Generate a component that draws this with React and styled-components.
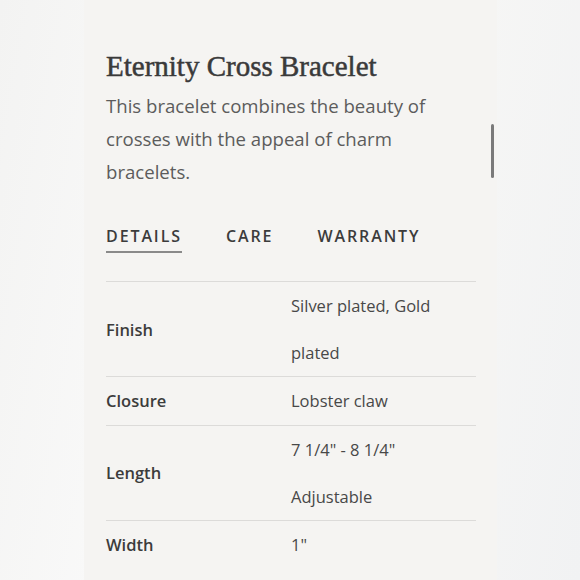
import React from "react";
import styled, { createGlobalStyle } from "styled-components";

const Global = createGlobalStyle`
  html, body { margin: 0; padding: 0; }
  body {
    width: 580px; height: 580px; overflow: hidden;
    background: linear-gradient(100deg, #f3f3f2 0%, #fbfbfb 40%, #f6f6f5 70%, #f1f2f3 100%);
    font-family: "Open Sans", "Noto Sans", sans-serif;
  }
`;

const Page = styled.div`
  display: flex;
  justify-content: flex-start;
  width: 580px;
  height: 580px;
`;

const Panel = styled.section`
  position: relative;
  margin-left: 84px;
  width: 413px;
  height: 580px;
  background: #f5f4f2;
  padding: 47px 21px 0 22px;
  box-sizing: border-box;
`;

const Scrollbar = styled.div`
  position: absolute;
  left: 407px;
  top: 124px;
  width: 3px;
  height: 54px;
  border-radius: 2px;
  background: #7a7a7a;
`;

const Title = styled.h1`
  margin: 0;
  font-family: "Liberation Serif", "Times New Roman", serif;
  font-weight: 400;
  font-size: 29px;
  line-height: 38px;
  color: #3a3a3a;
  -webkit-text-stroke: 0.5px #3a3a3a;
`;

const Desc = styled.p`
  margin: 4px 0 0;
  width: 350px;
  font-size: 18.6px;
  font-weight: 400;
  line-height: 33px;
  color: #5c5c5c;
`;

const Tabs = styled.nav`
  display: flex;
  gap: 44px;
  margin-top: 37px;
`;

const Tab = styled.span`
  font-size: 16px;
  font-weight: 600;
  letter-spacing: 1.9px;
  line-height: 22px;
  color: #3c3c3c;
  padding-bottom: 4px;
  border-bottom: 2px solid ${p => (p.$active ? "#8a8a8a" : "transparent")};
`;

const Table = styled.div`
  margin-top: 28px;
  width: 370px;
  border-top: 1px solid #dcdbd9;
`;

const Row = styled.div`
  display: grid;
  grid-template-columns: 185px 1fr;
  align-items: center;
  border-bottom: ${p => (p.$last ? "none" : "1px solid #dcdbd9")};
  min-height: 47px;
`;

const Label = styled.div`
  font-size: 16.5px;
  font-weight: 600;
  color: #3c3c3c;
  line-height: 47.2px;
`;

const Value = styled.div`
  font-size: 16.5px;
  font-weight: 400;
  color: #484848;
  line-height: 47.2px;
`;

const rows = [
  ["Finish", ["Silver plated, Gold", "plated"]],
  ["Closure", ["Lobster claw"]],
  ["Length", ['7 1/4" - 8 1/4"', "Adjustable"]],
  ["Width", ['1"']],
];

export default function App() {
  return (
    <Page>
      <Global />
      <Panel>
        <Scrollbar />
        <Title>Eternity Cross Bracelet</Title>
        <Desc>This bracelet combines the beauty of crosses with the appeal of charm bracelets.</Desc>
        <Tabs>
          <Tab $active>DETAILS</Tab>
          <Tab>CARE</Tab>
          <Tab>WARRANTY</Tab>
        </Tabs>
        <Table>
          {rows.map(([k, v], i) => (
            <Row key={k} $last={i === rows.length - 1}>
              <Label>{k}</Label>
              <Value>
                {v.map(line => (
                  <div key={line}>{line}</div>
                ))}
              </Value>
            </Row>
          ))}
        </Table>
      </Panel>
    </Page>
  );
}
